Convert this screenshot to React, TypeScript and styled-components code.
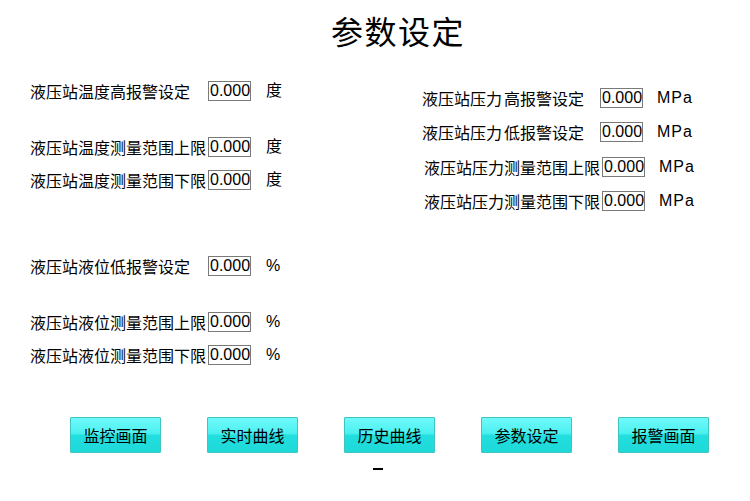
import React from "react";
import styled, { createGlobalStyle } from "styled-components";

const Global = createGlobalStyle`
  html, body { margin: 0; padding: 0; background: #ffffff; }
  body { font-family: "Noto Sans CJK SC", "Liberation Sans", sans-serif; color: #000; }
`;

const Page = styled.div`
  width: 750px;
  height: 501px;
  display: flex;
  flex-direction: column;
  overflow: hidden;
`;

const Title = styled.h1`
  margin: 0;
  height: 60px;
  padding-left: 46px;
  display: flex;
  align-items: center;
  justify-content: center;
  font-size: 32px;
  font-weight: 400;
  line-height: 1;
  letter-spacing: 1.5px;
  font-family: "Noto Sans CJK SC", sans-serif;
`;

const Main = styled.div`
  display: flex;
`;

const Column = styled.div<{ $left: number; $top: number; $width?: number }>`
  display: flex;
  flex-direction: column;
  padding-left: ${(p) => p.$left}px;
  padding-top: ${(p) => p.$top}px;
  width: ${(p) => (p.$width ? `${p.$width}px` : "auto")};
  box-sizing: border-box;
`;

const Row = styled.div<{ $mt: number; $shift?: number }>`
  display: flex;
  align-items: center;
  height: 20px;
  margin-top: ${(p) => p.$mt}px;
  margin-left: ${(p) => p.$shift ?? 0}px;
`;

const Label = styled.span`
  width: 178px;
  font-size: 16px;
  white-space: pre;
  font-family: "Noto Sans CJK SC", sans-serif;
  line-height: 20px;
`;

const Gap = styled.span`
  display: inline-block;
  width: 2px;
`;

const ValueBox = styled.div`
  width: 43px;
  height: 20px;
  box-sizing: border-box;
  border: 1px solid #7a7a7a;
  font-family: "Liberation Sans", Arial, sans-serif;
  font-size: 16px;
  line-height: 18px;
  padding-left: 1px;
  overflow: hidden;
  white-space: nowrap;
`;

const Unit = styled.span<{ $gap: number; $spacing?: number }>`
  margin-left: ${(p) => p.$gap}px;
  font-size: 16px;
  letter-spacing: ${(p) => p.$spacing ?? 0}px;
  font-family: "Liberation Sans", "Noto Sans CJK SC", sans-serif;
  line-height: 20px;
`;

const ButtonBar = styled.div`
  display: flex;
  gap: 46px;
  padding-left: 70px;
  margin-top: 52px;
`;

const NavButton = styled.button`
  width: 91px;
  height: 36px;
  box-sizing: border-box;
  border: 1px solid #3fc4c4;
  border-radius: 1px;
  background: linear-gradient(#70fafa 0%, #4cf0f0 45%, #22dede 52%, #1fd9d9 100%);
  font-family: "Noto Sans CJK SC", sans-serif;
  font-size: 16px;
  color: #000;
  padding: 0;
  display: flex;
  align-items: center;
  justify-content: center;
  cursor: pointer;
`;

const Dash = styled.div`
  margin-left: 373px;
  margin-top: 15px;
  width: 10px;
  height: 2px;
  background: #000;
`;

type Item = { head: string; tail?: string; mt: number; shift?: number };

const leftItems: Item[] = [
  { head: "液压站温度高报警设定", mt: 0 },
  { head: "液压站温度测量范围上限", mt: 36 },
  { head: "液压站温度测量范围下限", mt: 13 },
  { head: "液压站液位低报警设定", mt: 66 },
  { head: "液压站液位测量范围上限", mt: 36 },
  { head: "液压站液位测量范围下限", mt: 13 },
];
const leftUnits = ["度", "度", "度", "%", "%", "%"];

const rightItems: Item[] = [
  { head: "液压站压力", tail: "高报警设定", mt: 0 },
  { head: "液压站压力", tail: "低报警设定", mt: 14 },
  { head: "液压站压力测量范围上限", mt: 15, shift: 2 },
  { head: "液压站压力测量范围下限", mt: 14, shift: 2 },
];

const buttons = ["监控画面", "实时曲线", "历史曲线", "参数设定", "报警画面"];

export default function App() {
  return (
    <Page>
      <Global />
      <Title>参数设定</Title>
      <Main>
        <Column $left={30} $top={21} $width={422}>
          {leftItems.map((it, i) => (
            <Row key={it.head} $mt={it.mt}>
              <Label>{it.head}</Label>
              <ValueBox>0.000</ValueBox>
              <Unit $gap={15}>{leftUnits[i]}</Unit>
            </Row>
          ))}
        </Column>
        <Column $left={0} $top={28}>
          {rightItems.map((it) => (
            <Row key={it.head + (it.tail ?? "")} $mt={it.mt} $shift={it.shift}>
              <Label>
                {it.head}
                {it.tail && <Gap />}
                {it.tail}
              </Label>
              <ValueBox>0.000</ValueBox>
              <Unit $gap={14} $spacing={1}>MPa</Unit>
            </Row>
          ))}
        </Column>
      </Main>
      <ButtonBar>
        {buttons.map((b) => (
          <NavButton key={b}>{b}</NavButton>
        ))}
      </ButtonBar>
      <Dash />
    </Page>
  );
}
